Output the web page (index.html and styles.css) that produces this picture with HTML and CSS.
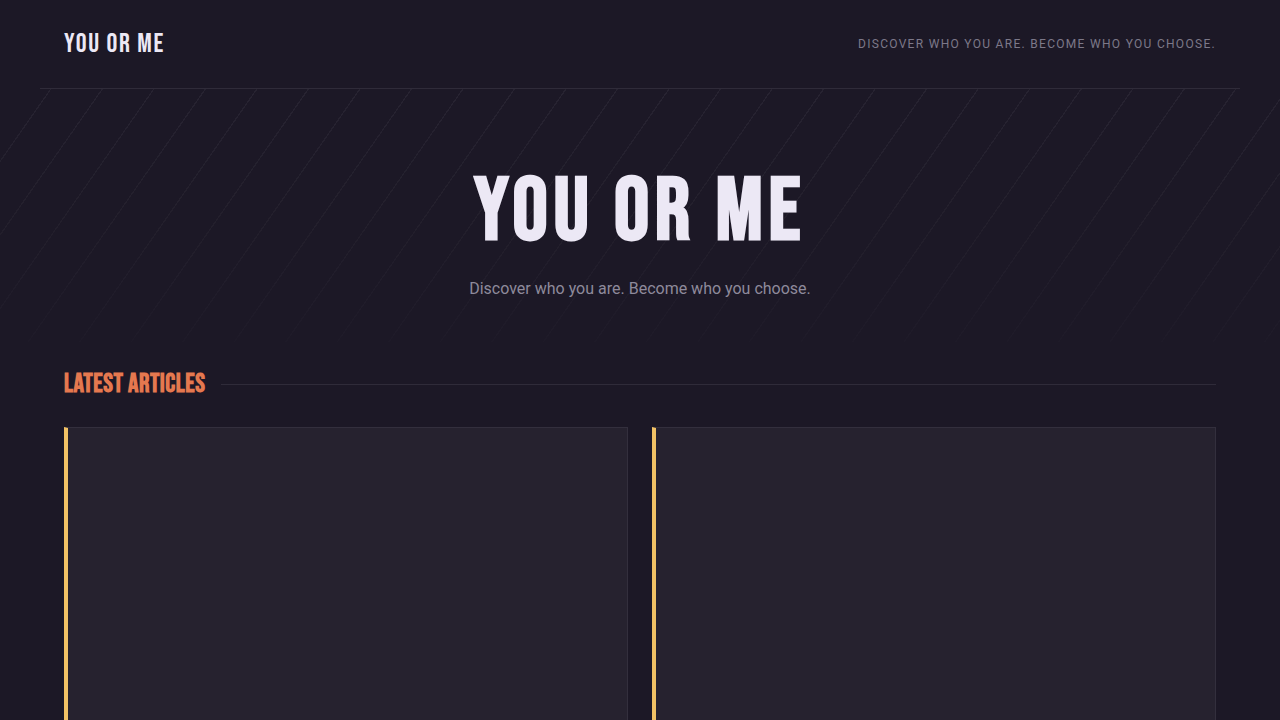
FILE: index.html
```html
<!DOCTYPE html>
<html lang="en">
<head>
<meta charset="utf-8">
<title>You or Me</title>
<link rel="stylesheet" href="styles.css">
</head>
<body>
<div class="page">
  <header class="site-header">
    <div class="logo">YOU OR ME</div>
    <div class="tagline">Discover who you are. Become who you choose.</div>
  </header>
  <section class="hero">
    <div class="hero-stripes"></div>
    <h1 class="hero-title">YOU OR ME</h1>
    <p class="hero-sub">Discover who you are. Become who you choose.</p>
  </section>
  <main class="content">
    <div class="section-head">
      <h2 class="section-title">Latest Articles</h2>
      <div class="section-rule"></div>
    </div>
    <div class="cards">
      <article class="card"></article>
      <article class="card"></article>
    </div>
  </main>
</div>
</body>
</html>
```
FILE: styles.css
```css
* { box-sizing: border-box; }
html, body { margin: 0; padding: 0; }
body {
  background: #1c1826;
  color: #ece8f5;
  font-family: Roboto, "Noto Sans", sans-serif;
  overflow: hidden;
  height: 720px;
}
.page { position: relative; }
.site-header {
  max-width: 1200px;
  margin: 0 auto;
  height: 89px;
  padding: 0 24px;
  display: flex;
  align-items: center;
  justify-content: space-between;
  border-bottom: 1px solid #2f2b39;
}
.logo, .hero-title, .section-title {
  font-family: "Bebas Neue", Oswald, "Roboto Condensed", "Liberation Sans Narrow", "DejaVu Sans Condensed", sans-serif;
  text-transform: uppercase;
}
.logo {
  font-weight: 400;
  font-size: 27px;
  letter-spacing: 1.6px;
  color: #ece8f5;
}
.tagline {
  font-size: 12px;
  letter-spacing: 1.3px;
  text-transform: uppercase;
  color: #7c7889;
}
.hero {
  position: relative;
  text-align: center;
  padding: 76px 0 44px;
}
.hero-stripes {
  position: absolute;
  inset: 0;
  background: repeating-linear-gradient(125deg, transparent 0 41px, rgba(255,255,255,0.05) 41px 42.2px);
  -webkit-mask-image: linear-gradient(to bottom, #000 0%, rgba(0,0,0,0.25) 100%);
  mask-image: linear-gradient(to bottom, #000 0%, rgba(0,0,0,0.25) 100%);
  pointer-events: none;
}
.hero-title {
  position: relative;
  margin: 0;
  font-weight: 700;
  font-size: 88px;
  line-height: 1.1;
  letter-spacing: 5.6px;
  color: #ece8f5;
}
.hero-sub {
  position: relative;
  margin: 17px 0 0;
  font-size: 16px;
  color: #8e8a9b;
}
.content {
  max-width: 1152px;
  margin: 0 auto;
}
.section-head {
  display: flex;
  align-items: center;
  gap: 16px;
  padding-top: 28px;
}
.section-title {
  margin: 0;
  font-weight: 700;
  font-size: 26px;
  line-height: 30px;
  letter-spacing: 0.5px;
  color: #e5784f;
}
.section-rule {
  flex: 1;
  height: 1px;
  background: #2f2b39;
}
.cards {
  margin-top: 27px;
  display: grid;
  grid-template-columns: 1fr 1fr;
  gap: 24px;
}
.card {
  height: 400px;
  background: #26222f;
  border: 1px solid #332f3d;
  border-left: 4px solid #f2c265;
}
```
